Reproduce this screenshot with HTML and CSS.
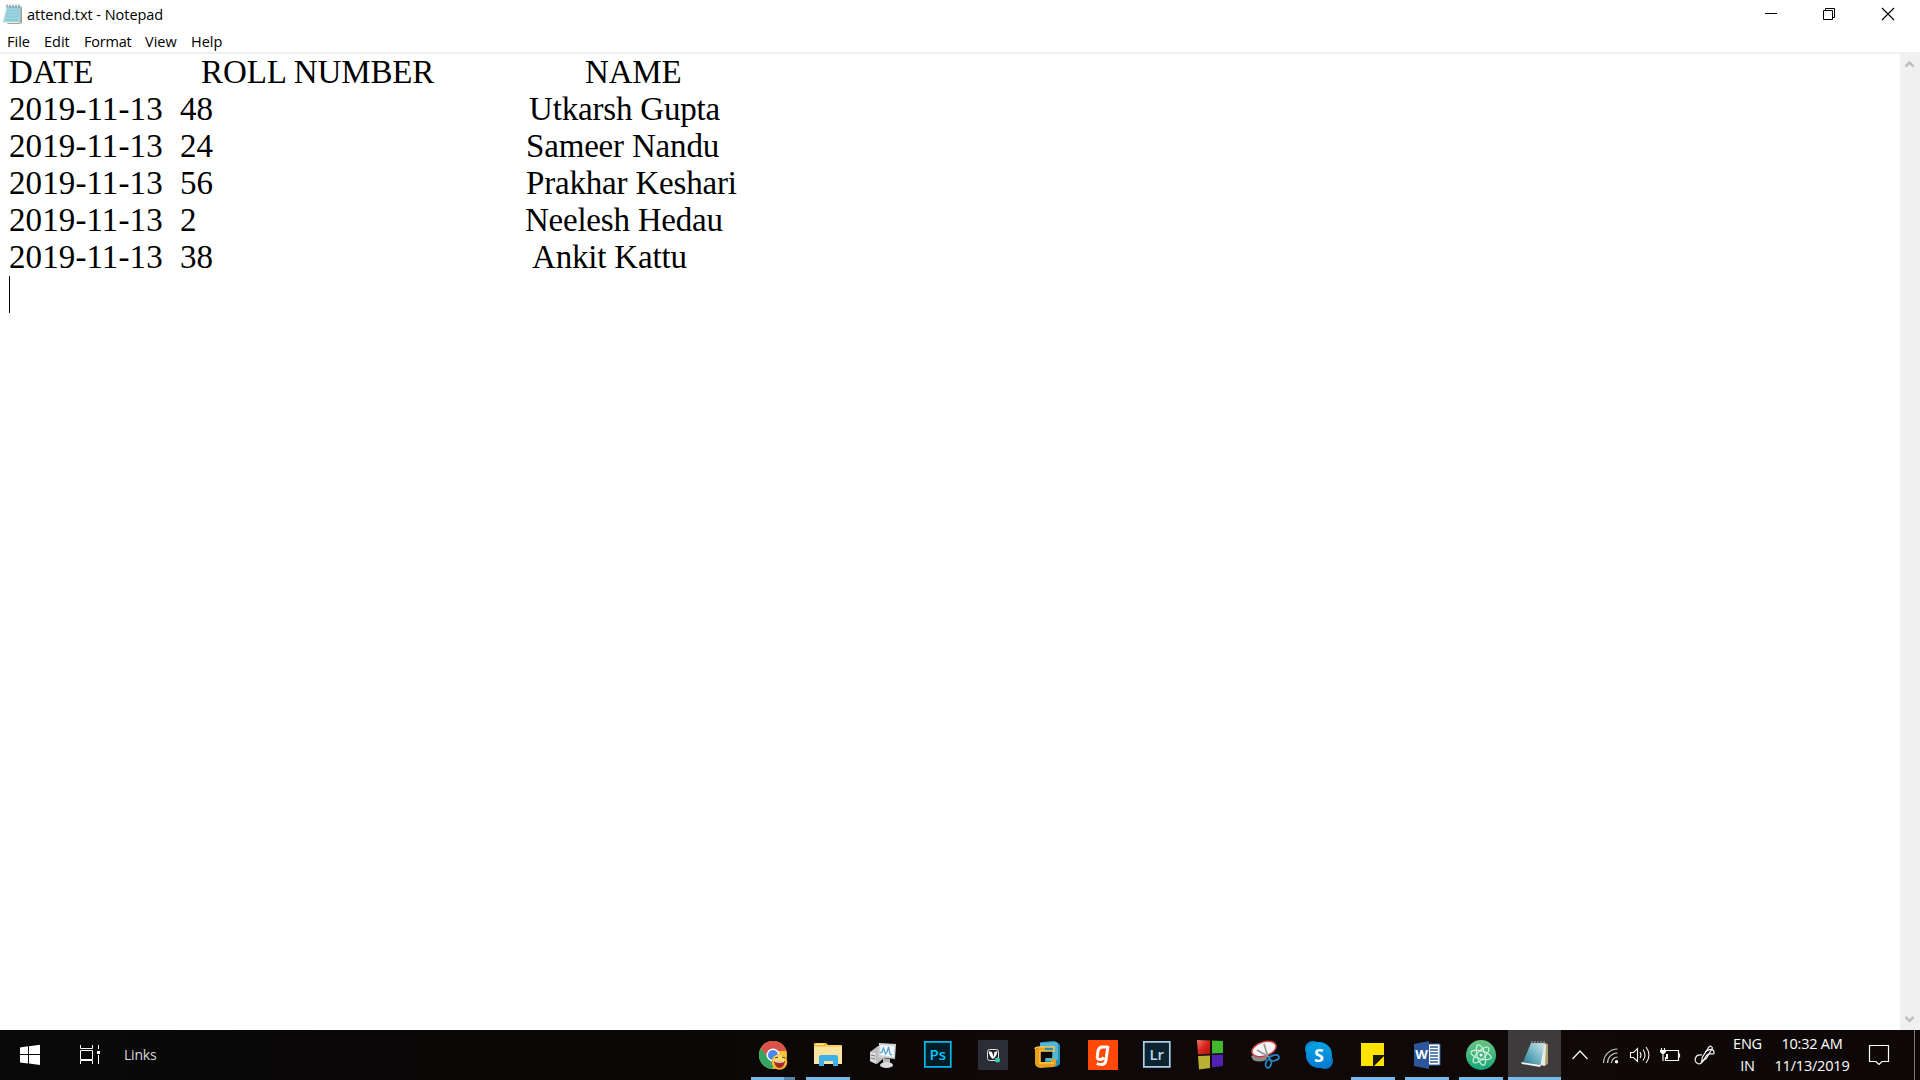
FILE: index.html
```html
<!DOCTYPE html>
<html lang="en">
<head>
<meta charset="utf-8">
<title>attend.txt - Notepad</title>
<link rel="stylesheet" href="styles.css">
</head>
<body>
<main class="window">
  <header class="titlebar">
    <svg class="file-icon" width="20" height="20" viewBox="0 0 20 20"><path d="M16 2l3 1v16l-3 1H5l-1-1z" fill="#a9a089"/><path d="M4 2h14l-1 17H1L0 18z" fill="#a6d5df"/><path d="M5 3h12l-2 14H2z" fill="#8bcbd9"/><path d="M5 5h11M4.500 8h11M4 11h11M3 14h12" stroke="#a9dae4"/><path d="M4 .5v3M7 .5v3M10 .5v3M13 .5v3M16 .5v3" stroke="#777c78"/><path d="M1 18.500h15" stroke="#e6eeee"/></svg>
    <h1 class="title">attend.txt - Notepad</h1>
    <div class="controls">
      <svg width="58" height="28"><path d="M18 13.500h12" stroke="#000"/></svg>
      <svg width="58" height="28"><path d="M18.500 10.500h9v9h-9zM20.500 10V8.500h9v9H28" fill="none" stroke="#000"/></svg>
      <svg width="58" height="28"><path d="M19 8l12 12M31 8L19 20" stroke="#000" stroke-width="1.200"/></svg>
    </div>
  </header>
  <nav class="menubar"><span class="m-file">File</span><span class="m-edit">Edit</span><span class="m-format">Format</span><span class="m-view">View</span><span class="m-help">Help</span></nav>
  <section class="editor">
    <div class="document">
      <div class="line"><span class="date word-date">DATE</span><span class="roll heading">ROLL NUMBER</span><span class="name n0">NAME</span></div>
      <div class="line"><span class="date">2019-11-13</span><span class="roll">48</span><span class="name n1">Utkarsh Gupta</span></div>
      <div class="line"><span class="date">2019-11-13</span><span class="roll">24</span><span class="name n2">Sameer Nandu</span></div>
      <div class="line"><span class="date">2019-11-13</span><span class="roll">56</span><span class="name n3">Prakhar Keshari</span></div>
      <div class="line"><span class="date">2019-11-13</span><span class="roll">2</span><span class="name n4">Neelesh Hedau</span></div>
      <div class="line"><span class="date">2019-11-13</span><span class="roll">38</span><span class="name n5">Ankit Kattu</span></div>
      <div class="line"><span class="caret"></span></div>
    </div>
    <div class="scrollbar">
      <svg width="20" height="20"><path d="M5.500 12.500L9.500 8.500l4 4" fill="none" stroke="#bfbfbf" stroke-width="2.500"/></svg>
      <svg width="20" height="20"><path d="M5.500 7L9.500 11l4-4" fill="none" stroke="#bfbfbf" stroke-width="2.500"/></svg>
    </div>
  </section>
</main>
<footer class="taskbar">
  <div class="start"><svg width="60" height="50" viewBox="0 0 60 50"><path d="M20 17.500l8-1.200V24h-8zM29 16.200l11-1.400V24H29zM20 25h8v8.600l-8-1.100zM29 25h11v10l-11-1.400z" fill="#fff"/></svg></div>
  <div class="taskview"><svg width="60" height="50" viewBox="0 0 60 50" fill="none" stroke="#fff"><path d="M20.500 15v3.500h12V15M20.500 20.500h12v9h-12zM20.500 34v-3.500h12V34M38.500 15v4M38.500 25v9"/><path d="M37 21h3v3h-3z" fill="#fff" stroke="none"/></svg></div>
  <div class="links">Links</div>
  <div class="apps">
    <div class="app running grouped"><svg width="30" height="30" viewBox="0 0 30 30"><circle cx="15" cy="15" r="14" fill="#f2c33d"/><path d="M2.900 8A14 14 0 0 1 28.500 11H15L9 17z" fill="#d9534b"/><path d="M2.900 8A14 14 0 0 0 14 29l6-10-10-1z" fill="#35a563"/><circle cx="15" cy="15" r="6.500" fill="#fff"/><circle cx="15" cy="15" r="5" fill="#4c86ee"/><circle cx="21.500" cy="22" r="7.800" fill="#efb534"/><circle cx="21" cy="20.500" r="6" fill="#ffda65"/><path d="M16 21q6 1.500 11 0-1 7-5.500 7T16 21" fill="#a62424"/><path d="M17 18l3-1M24 17l3 1" stroke="#563512"/><path d="M17 21.500q5 2 9 0" stroke="#fff" fill="none"/></svg></div>
    <div class="app running"><svg width="30" height="30" viewBox="0 0 30 30"><path d="M1 4q0-1 1-1h11l2 2h13q1 0 1 1v18H1z" fill="#f6cf66"/><path d="M1 7h28v17H1z" fill="#fee4a0"/><path d="M2 3h10l2 2-2 1H2z" fill="#f7b900"/><path d="M3 3.700h8v1H3z" fill="#fff"/><path d="M6 26V17q0-2 2-2h15q2 0 2 2v9h-5v-5h-9v5z" fill="#3db2e8"/></svg></div>
    <div class="app"><svg width="30" height="30" viewBox="0 0 30 30"><path d="M2 12l8-6 7 1-1 11-7 6-7-3z" fill="#bdbdbd"/><path d="M2 12l6 1v11l-6-3z" fill="#dcdcdc"/><path d="M2.500 15l5 1M2.500 18l5 1" stroke="#808080" fill="none"/><path d="M11 3l17 1-1 15-17-2z" fill="#cfd3d4"/><path d="M12.500 5l14 1-1 11-13.500-2z" fill="#edf7fb"/><path d="M12 13l2-1 1.500-4 2 6 1.500-2 1.500-5 1.500 7 2 1" fill="none" stroke="#4d9ccc" stroke-width="1.200"/><path d="M15 18l7 1v5h-7z" fill="#b6b6b6"/><ellipse cx="18.500" cy="25" rx="6.500" ry="3" fill="#dedede"/></svg></div>
    <div class="app"><svg width="30" height="30" viewBox="0 0 30 30"><path d="M1.800 1.800h26v25h-26z" fill="#001c27" stroke="#00b9ef" stroke-width="1.700"/><text x="14.800" y="19.500" text-anchor="middle" class="ps">Ps</text></svg></div>
    <div class="app"><svg width="30" height="30" viewBox="0 0 30 30"><path d="M0 0h30v30H0z" fill="#2b2d37"/><rect x="9.500" y="9.500" width="11" height="11" rx="2" fill="#25262c" stroke="#ddd"/><path d="M10.500 11q1 6 4.500 8 3.500-2 4.500-8l-3 1-1 5-1.500-5z" fill="#fff"/><circle cx="19.500" cy="20" r="2.500" fill="#3bcbb2"/></svg></div>
    <div class="app"><svg width="30" height="30" viewBox="0 0 30 30"><path d="M7 3q0-1 2-1l12-1q6 2 6 5v17q0 3-6 4l-9-2V9H7z" fill="#278eb4"/><path d="M7 3l15-1q3 0 3 4v12q0 3-3 3h-9v-4h7V7H11v3H7z" fill="#51b7d4"/><path d="M11 11h8v7h-8z" fill="#0d0908"/><path d="M2 9l5-2h5v4H7v11h11v-3h5v4q0 3-3 4l-13 1q-5-1-5-5z" fill="#e6a01b"/><path d="M2 9q0-2 5-2h14v4H7v12h14" fill="none" stroke="#ffc34a" stroke-width="1.500"/></svg></div>
    <div class="app"><svg width="30" height="30" viewBox="0 0 30 30"><path d="M0 0h30v30H0z" fill="#ff4909"/><path d="M19.800 7h-5q-4 0-4.800 4l-.7 5q-.6 3.500 2.700 3.500 2.500 0 4-2M20 6l-2.200 15q-.5 3.500-4.500 3.500-2.500 0-4.500-1" fill="none" stroke="#fff" stroke-width="3"/></svg></div>
    <div class="app"><svg width="30" height="30" viewBox="0 0 30 30"><path d="M1.800 1.800h26v25h-26z" fill="#0d2430" stroke="#a9d0e8" stroke-width="1.700"/><text x="14.800" y="19.500" text-anchor="middle" class="lr">Lr</text></svg></div>
    <div class="app"><svg width="30" height="30" viewBox="0 0 30 30"><defs><linearGradient id="red" x2="1" y2="1"><stop stop-color="#ee7b70"/><stop offset=".5" stop-color="#d8271b"/><stop offset="1" stop-color="#a81412"/></linearGradient></defs><path d="M1 0l13 .5V14l-12 .500z" fill="url(#red)"/><path d="M16 .5l11 .5v12l-11 .5z" fill="#43b82e"/><path d="M2 16l12-.5V28L3 29.500z" fill="#b7b034"/><path d="M16 15l11-.5V26l-11 1.200z" fill="#5021b3"/></svg></div>
    <div class="app"><svg width="30" height="30" viewBox="0 0 30 30"><path d="M1 16l10-4 7 4-2 4q-7 3-13 0z" fill="#8c8c8c"/><ellipse cx="14" cy="9" rx="12.500" ry="7" transform="rotate(-18 14 9)" fill="#f4f4f4" stroke="#cc4040" stroke-width="1.500"/><path d="M7 10l12 7M14 4l4 13" stroke="#969696" stroke-width="1.700"/><g fill="none" stroke="#2587c5" stroke-width="1.800"><ellipse cx="24" cy="18" rx="5" ry="2.700" transform="rotate(-15 24 18)"/><ellipse cx="18.500" cy="23.500" rx="2.700" ry="4.500" transform="rotate(15 18.500 23.500)"/></g></svg></div>
    <div class="app"><svg width="30" height="30" viewBox="0 0 30 30"><defs><linearGradient id="sky" x2="0" y2="1"><stop stop-color="#03a5e6"/><stop offset="1" stop-color="#087bd2"/></linearGradient></defs><circle cx="9" cy="9" r="8" fill="#0b8ad1"/><circle cx="21" cy="21" r="8" fill="#0878cd"/><circle cx="15" cy="15" r="13" fill="url(#sky)"/><text x="15" y="21.500" text-anchor="middle" class="skype">S</text></svg></div>
    <div class="app running"><svg width="30" height="30" viewBox="0 0 30 30"><path d="M3 3h23v12H15v11H3z" fill="#ffe300"/><path d="M15 15h11L15 26z" fill="#191900"/><path d="M26 16v10H16z" fill="#ffe300"/></svg></div>
    <div class="app running"><svg width="30" height="30" viewBox="0 0 30 30"><path d="M15 4h13v21H15z" fill="#fff" stroke="#3266ad"/><path d="M18 7h8M18 10h8M18 13h8M18 16h8M18 19h8M18 22h8" stroke="#2d5c9f" stroke-width="1.500"/><path d="M2 4l15-3v28L2 26z" fill="#2b579a"/><text x="9.500" y="19" text-anchor="middle" class="word">W</text></svg></div>
    <div class="app running"><svg width="30" height="30" viewBox="0 0 30 30"><defs><linearGradient id="mint" x2="0" y2="1"><stop stop-color="#6bc481"/><stop offset="1" stop-color="#15a87b"/></linearGradient></defs><circle cx="15" cy="15" r="15" fill="url(#mint)"/><g fill="none" stroke="#d8f4df" stroke-width="1.100"><ellipse cx="15" cy="15" rx="10.500" ry="4" transform="rotate(15 15 15)"/><ellipse cx="15" cy="15" rx="10.500" ry="4" transform="rotate(75 15 15)"/><ellipse cx="15" cy="15" rx="10.500" ry="4" transform="rotate(-45 15 15)"/></g><circle cx="15" cy="15" r="1.500" fill="#fff"/></svg></div>
    <div class="app running active"><svg width="30" height="30" viewBox="0 0 30 30"><defs><linearGradient id="pad" x1="1" y1="0" x2="0" y2="1"><stop stop-color="#d6e7e8"/><stop offset=".5" stop-color="#72b6c5"/><stop offset="1" stop-color="#247991"/></linearGradient></defs><path d="M25 3l3 1v20l-4 2-3-3z" fill="#b5a063"/><path d="M24 3l2 2-1 21-5-1z" fill="#e6eced"/><path d="M11 3h14l-5 22-17-3z" fill="url(#pad)"/><path d="M1 22l20 3-1 2-18-3z" fill="#f2f6f6"/><path d="M12 1v3M15 1v3M18 1v3M21 1v3M24 1v3" stroke="#aab0ae"/></svg></div>
  </div>
  <div class="tray">
    <svg width="132" height="50" viewBox="1561 0 132 50" fill="none" stroke="#f4f4f4"><path d="M1572.500 29l7.500-8 7.500 8" stroke-width="1.300"/><path d="M1603.500 33a14 14 0 0 1 14-14M1607.500 33a10 10 0 0 1 10-10M1611.500 33a6 6 0 0 1 6-6" stroke="#c8c8c8" stroke-width="1.200"/><circle cx="1616.500" cy="31.800" r="1.700" fill="#fff" stroke="none"/><path d="M1630.500 22.500h3l4-4v13l-4-4h-3zM1640 22q2 3 0 6M1643 19.500q4 5.500 0 11M1646 17q6 8 0 16" stroke-width="1.100"/><path d="M1666 20.500h12.500v10h-13V27M1679.500 23.500v4" stroke-width="1.200"/><path d="M1661.500 18v3M1664.500 18v3M1663 23v8" stroke-width="1.200"/><path d="M1660 20h6v2l-2 2h-2l-2-2zM1666 24h2v5h-2z" fill="#fff" stroke="none"/></svg>
    <svg width="24" height="50" viewBox="1693 0 24 50" fill="none" stroke="#f5f5f5" stroke-width="1.200"><path d="M1702 25c-8-1-9 8-3 9 4 0 5-6 8-9s8 1 7-3-5-3-9 0"/><path d="M1701.500 32l1-5 6.500-10q2-2 3.500 1l-6 10z"/></svg>
  </div>
  <div class="language"><span>ENG</span><span>IN</span></div>
  <div class="clock"><span class="time">10:32 AM</span><span class="day">11/13/2019</span></div>
  <div class="action"><svg width="40" height="50"><path d="M10.500 15.500h19v16h-6.500l-3 3-3-3h-6.500z" fill="none" stroke="#fff" stroke-width="1.200"/></svg></div>
  <div class="show-desktop"></div>
</footer>
</body>
</html>
```

FILE: styles.css
```css
* { box-sizing: border-box; }
body { margin: 0; width: 1920px; height: 1080px; overflow: hidden; display: flex; flex-direction: column; background: #fff; color: #000; font-family: "Open Sans", "Noto Sans", sans-serif; }
svg { display: block; flex: none; }
.window { height: 1030px; display: flex; flex-direction: column; }
.titlebar { height: 28px; display: flex; align-items: center; padding-left: 3px; }
.title { margin: 0 0 0 4px; font-size: 14.500px; font-weight: 400; line-height: 28px; padding-top: 1px; letter-spacing: -.04px; white-space: nowrap; }
.controls { display: flex; margin-left: auto; margin-right: -1px; }
.menubar { height: 24px; display: flex; padding-left: 7px; font-size: 14.500px; line-height: 27px; white-space: nowrap; }
.m-file { width: 37px; }
.m-edit { width: 40px; }
.m-format { width: 61px; letter-spacing: -.2px; }
.m-view { width: 46px; }
.editor { height: 978px; display: flex; border-top: 2px solid #f0f0f0; }
.document { flex: 1; padding-left: 9px; font: 33px/37px "Liberation Serif", serif; }
.line { height: 37px; display: flex; white-space: nowrap; }
.date { width: 171px; letter-spacing: .1px; }
.word-date { width: 192px; letter-spacing: 0; }
.roll { width: 345px; letter-spacing: .1px; }
.heading { width: 383px; letter-spacing: -.1px; }
.name { letter-spacing: -.18px; }
.n0 { padding-left: 1px; }
.n1 { padding-left: 4px; }
.n2 { padding-left: 1px; }
.n3 { padding-left: 1px; }
.n4 { letter-spacing: -.23px; }
.n5 { padding-left: 7px; }
.caret { width: 1px; height: 37px; background: #000; }
.scrollbar { width: 20px; display: flex; flex-direction: column; justify-content: space-between; background: #f0f0f0; }
.taskbar { height: 50px; display: flex; background: linear-gradient(90deg, #090909, #0a0706 30%, #100909 60%, #0d0807); color: #fff; }
.start, .taskview { width: 60px; }
.links { width: 625px; padding-left: 4px; font-size: 14px; line-height: 49px; letter-spacing: -.2px; color: #d8d8d8; }
.apps { width: 816px; display: grid; grid-template-columns: repeat(7, 55px) repeat(7, 54px) 53px; }
.app { display: flex; justify-content: center; padding-top: 10px; }
.running { background: linear-gradient(#76b9ed, #76b9ed) center bottom / 44px 3px no-repeat; }
.grouped { background: linear-gradient(90deg, #76b9ed 76%, #5486ad 76%) center bottom / 44px 3px no-repeat; }
.active { background: linear-gradient(#76b9ed, #76b9ed) bottom / 100% 3px no-repeat #3d3b3b; }
.ps, .lr { font: 600 15px "Open Sans", sans-serif; fill: #00c8ff; }
.lr { fill: #b2d9ef; }
.skype { font: 700 18px "Open Sans", sans-serif; fill: #fff; }
.word { font: 700 13px "Open Sans", sans-serif; fill: #fff; }
.tray { width: 165px; display: flex; }
.language, .clock { display: flex; flex-direction: column; align-items: center; font-size: 14.500px; line-height: 22px; padding-top: 3px; white-space: nowrap; }
.language { width: 43px; letter-spacing: -.2px; }
.clock { width: 86px; }
.time { letter-spacing: -.25px; }
.day { letter-spacing: -.2px; }
.action { width: 59px; padding-left: 4px; }
.show-desktop { width: 6px; border-left: 1px solid #777; }
```
